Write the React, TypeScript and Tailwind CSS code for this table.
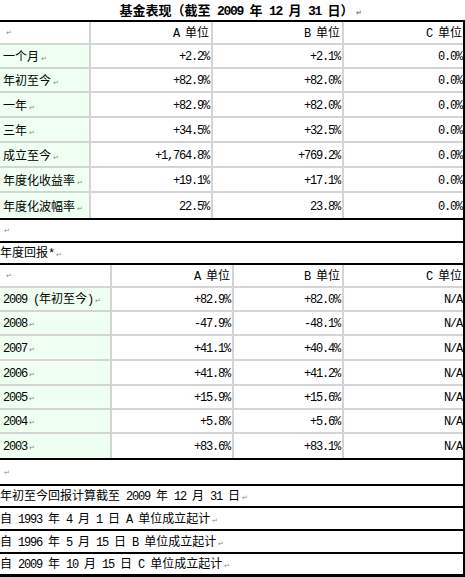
import React from 'react';

const Mark = () => (
  <span className="ml-[2px] text-[7px] leading-none text-[#8a8a8a] align-baseline">↵</span>
);

// split mixed text so latin runs get the narrow mono face
const Txt: React.FC<{ s: string; big?: boolean; mark?: boolean }> = ({ s, big, mark }) => {
  const parts = s.split(/([\x20-\x7e]+)/).filter(p => p !== '');
  return (
    <span className="whitespace-pre">
      {parts.map((p, i) =>
        /^[\x20-\x7e]+$/.test(p) ? (
          <span
            key={i}
            className={
              big
                ? "font-['Liberation_Mono'] text-[13px] tracking-[-1.3px]"
                : "font-['Liberation_Mono'] text-[12px] tracking-[-1.2px]"
            }
          >
            {p}
          </span>
        ) : (
          <span key={i}>{p}</span>
        )
      )}
      {mark && <Mark />}
    </span>
  );
};

interface Row {
  label: string;
  a: string;
  b: string;
  c: string;
  h: number;
}

const perf: Row[] = [
  { label: '一个月', a: '+2.2%', b: '+2.1%', c: '0.0%', h: 24 },
  { label: '年初至今', a: '+82.9%', b: '+82.0%', c: '0.0%', h: 24 },
  { label: '一年', a: '+82.9%', b: '+82.0%', c: '0.0%', h: 25 },
  { label: '三年', a: '+34.5%', b: '+32.5%', c: '0.0%', h: 25 },
  { label: '成立至今', a: '+1,764.8%', b: '+769.2%', c: '0.0%', h: 25 },
  { label: '年度化收益率', a: '+19.1%', b: '+17.1%', c: '0.0%', h: 25 },
  { label: '年度化波幅率', a: '22.5%', b: '23.8%', c: '0.0%', h: 25 },
];

const yearly: Row[] = [
  { label: '2009 (年初至今)', a: '+82.9%', b: '+82.0%', c: 'N/A', h: 24 },
  { label: '2008', a: '-47.9%', b: '-48.1%', c: 'N/A', h: 24 },
  { label: '2007', a: '+41.1%', b: '+40.4%', c: 'N/A', h: 25 },
  { label: '2006', a: '+41.8%', b: '+41.2%', c: 'N/A', h: 25 },
  { label: '2005', a: '+15.9%', b: '+15.6%', c: 'N/A', h: 24 },
  { label: '2004', a: '+5.8%', b: '+5.6%', c: 'N/A', h: 24 },
  { label: '2003', a: '+83.6%', b: '+83.1%', c: 'N/A', h: 24 },
];

const notes = [
  { t: '年初至今回报计算截至 2009 年 12 月 31 日', h: 20 },
  { t: '自 1993 年 4 月 1 日 A 单位成立起计', h: 21 },
  { t: '自 1996 年 5 月 15 日 B 单位成立起计', h: 21 },
  { t: '自 2009 年 10 月 15 日 C 单位成立起计', h: 20 },
];

const DataTable: React.FC<{ rows: Row[]; cols: string; headH: number }> = ({ rows, cols, headH }) => (
  <div className="flex flex-col">
    <div className={`grid ${cols} border-b-2 border-[#d4d4d4]`} style={{ height: headH }}>
      <div className="flex items-center pl-[4px] border-r-2 border-[#d4d4d4]"><Mark /></div>
      <div className="flex items-center justify-end pr-[2px] border-r-2 border-[#d4d4d4]"><Txt s="A 单位" /></div>
      <div className="flex items-center justify-end pr-[2px] border-r-2 border-[#d4d4d4]"><Txt s="B 单位" /></div>
      <div className="flex items-center justify-end pr-[1px]"><Txt s="C 单位" /></div>
    </div>
    {rows.map((r, i) => (
      <div
        key={r.label}
        className={`grid ${cols} ${i < rows.length - 1 ? 'border-b-2 border-[#d4d4d4]' : ''}`}
        style={{ height: r.h }}
      >
        <div className="flex items-center pl-[3px] bg-[#effff2] border-r-2 border-[#d4d4d4]">
          <Txt s={r.label} mark />
        </div>
        <div className="flex items-center justify-end pr-[2px] border-r-2 border-[#d4d4d4]"><Txt s={r.a} /></div>
        <div className="flex items-center justify-end pr-[2px] border-r-2 border-[#d4d4d4]"><Txt s={r.b} /></div>
        <div className="flex items-center justify-end pr-[1px]"><Txt s={r.c} /></div>
      </div>
    ))}
  </div>
);

const Black: React.FC<{ h?: string }> = ({ h = 'h-[2px]' }) => <div className={`${h} bg-black`} />;

export default function App() {
  return (
    <div className="w-[465px] h-[577px] overflow-hidden bg-white text-black text-[12px] leading-none font-['Noto_Sans_CJK_SC',sans-serif]">
      <div className="h-[20px] flex items-center justify-center pl-[16px] font-bold text-[13px]">
        <Txt s="基金表现（截至 2009 年 12 月 31 日）" big mark />
      </div>
      <div className="border-r-2 border-black">
        <Black />
        <DataTable rows={perf} cols="grid-cols-[91px_122px_131px_119px]" headH={23} />
        <Black />
        <div className="h-[21px] flex items-center pl-[2px]"><Mark /></div>
        <Black />
        <div className="h-[20px] flex items-center"><Txt s="年度回报*" mark /></div>
        <Black />
        <DataTable rows={yearly} cols="grid-cols-[112px_122px_110px_119px]" headH={23} />
        <Black />
        <div className="h-[24px] flex items-center pl-[2px]"><Mark /></div>
        <Black />
        {notes.map((n, i) => (
          <React.Fragment key={n.t}>
            <div className="flex items-center" style={{ height: n.h }}>
              <Txt s={n.t} mark />
            </div>
            {i < notes.length - 1 ? <Black /> : <Black h="h-[3px]" />}
          </React.Fragment>
        ))}
      </div>
    </div>
  );
}
